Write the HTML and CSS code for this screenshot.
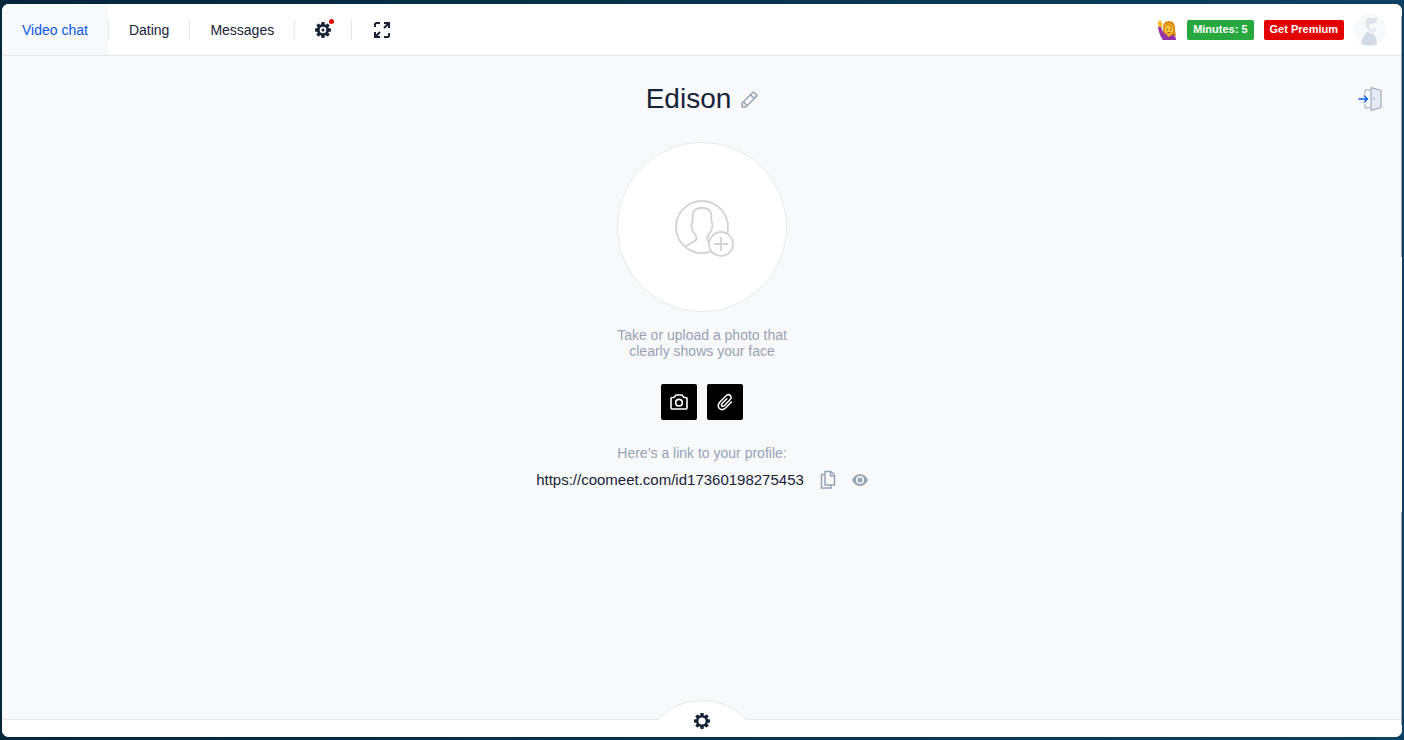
FILE: index.html
```html
<!DOCTYPE html>
<html lang="en">
<head>
<meta charset="utf-8">
<title>Video chat</title>
<link rel="stylesheet" href="styles.css">
</head>
<body>
<svg class="sprite" aria-hidden="true">
  <symbol id="gear" viewBox="0 0 16 16">
    <g fill="currentColor">
      <rect x="6.3" y="0" width="3.4" height="16" rx=".7"/>
      <rect x="0" y="6.3" width="16" height="3.4" rx=".7"/>
      <rect x="6.3" y="0" width="3.4" height="16" rx=".7" transform="rotate(45 8 8)"/>
      <rect x="6.3" y="0" width="3.4" height="16" rx=".7" transform="rotate(-45 8 8)"/>
      <circle cx="8" cy="8" r="6.1"/>
    </g>
  </symbol>
</svg>
<div class="window">
  <header class="header">
    <nav class="nav">
      <a class="tab tab-active" href="#">Video chat</a>
      <a class="tab" href="#">Dating</a>
      <a class="tab" href="#">Messages</a>
      <button class="tab tab-icon" aria-label="Settings">
        <svg width="16" height="16" viewBox="0 0 16 16"><use href="#gear"/><circle cx="8" cy="8" r="3.300" fill="#fff"/><circle cx="8" cy="8" r="1.500" fill="currentColor"/></svg>
        <span class="dot"></span>
      </button>
      <button class="tab tab-icon tab-last" aria-label="Full screen">
        <svg width="20" height="16" viewBox="0 0 20 16" fill="none" stroke="currentColor" stroke-width="2">
          <path d="M3 5V2.500Q3 1 4.500 1H8M17 11v2.500q0 1.500-1.500 1.500H12M12 1h5v5M17 1l-5 5M3 10v5h5M3 15l5-5"/>
        </svg>
      </button>
    </nav>
    <div class="account">
      <svg class="emoji" width="20" height="22" viewBox="0 0 20 22" role="img" aria-label="Raised hand">
        <path d="M6 9q0-7 6-7 6 0 6 7 0 4 1 7-2 3-4 3H8q-3-2-2-10z" fill="#d88912"/>
        <path d="M1 8l3-1q1 6 4 8 4 2 8 1 3 1 3 5H6Q2 16 1 8z" fill="#9432a8"/>
        <path d="M2 8Q0 3 1 2l1 1 0-2 1 1 1-1 0 2 1 0q1 3 0 5z" fill="#f8bd28"/>
        <path d="M10 14h4v3q-2 2-4 0z" fill="#e39c1b"/>
        <ellipse cx="12" cy="10.500" rx="4.500" ry="5" fill="#ffcb39"/>
        <path d="M7 10Q7 4 12 4q5 0 5 6-4-1-6-3-1 2-4 3z" fill="#e9a12a"/>
        <circle cx="10.200" cy="10.500" r=".7" fill="#593b2b"/><circle cx="14" cy="10.500" r=".7" fill="#593b2b"/>
        <path d="M10 13q2 1.500 4 0" stroke="#a5432d" fill="none"/>
      </svg>
      <button class="badge badge-green">Minutes: 5</button>
      <button class="badge badge-red">Get Premium</button>
      <button class="avatar" aria-label="Profile">
        <svg width="32" height="32" viewBox="0 0 32 32">
          <circle cx="16" cy="16" r="16" fill="#f7f9fb"/>
          <path d="M7 30q2-9 7-13l3 3 2-1q4 5 4 11-8 3-16 0z" fill="#d3dbe6"/>
          <path d="M12 12q-1-4 0-6 1-3 5-2 4 1 6-1 1 4-2 6l-5 1-1 4q3 2 6 2l1 1-4 1q-4-1-6-6z" fill="#dfe5ed"/>
          <path d="M17 15l5-2v4l-3 1z" fill="#e9edf3"/>
        </svg>
      </button>
    </div>
  </header>
  <main class="main">
    <button class="exit" aria-label="Leave">
      <svg width="24" height="26" viewBox="0 0 24 26" fill="none">
        <path d="M7 8V4h5M7 18v4h5M7 10v1" stroke="#9ba7ba"/>
        <path d="M13 1.500l10 3v17l-10 3z" fill="#e6eaf2" stroke="#8f9db3"/>
        <path d="M15 13h2" stroke="#8f9db3"/>
        <path d="M.5 13H9M6 9.500L9.500 13 6 16.500" stroke="#0b5be8" stroke-width="1.300"/>
      </svg>
    </button>
    <div class="title-row">
      <h1 class="title">Edison</h1>
      <button class="icon" aria-label="Edit name">
        <svg width="17" height="17" viewBox="0 0 17 17" fill="none" stroke="currentColor" stroke-width="1.500" stroke-linejoin="round">
          <path d="M1 12.200L11.700 1.500q.7-.7 1.400 0l2.400 2.400q.7.700 0 1.400L4.800 16H1zM9.500 3.700l3.800 3.800M2.500 11l3.700 3.700"/>
        </svg>
      </button>
    </div>
    <button class="photo" aria-label="Add photo">
      <svg width="60" height="58" viewBox="0 0 60 58" fill="none" stroke="#d1d2d7" stroke-width="1.800">
        <circle cx="28" cy="28" r="26"/>
        <path d="M12 47l8-4.500q3-1.500 2.500-4.500-.5-2-3-5-2-4-2-7 0-2 1-3 0-6 .5-9 1.500-5 9-5t9 5q.5 3 .5 9 1 1 1 3 0 3-2 7-3 3-3 6-.500 2 1 4"/>
        <circle cx="47" cy="45" r="12" fill="#fff"/>
        <path d="M47 38v14M40 45h14"/>
      </svg>
    </button>
    <p class="note">Take or upload a photo that<br>clearly shows your face</p>
    <div class="actions">
      <button class="action" aria-label="Take photo">
        <svg width="18" height="16" viewBox="0 0 18 16" fill="none" stroke="#fff" stroke-width="1.600">
          <path d="M1 4.500Q1 3.500 2 3.500h2L6 1h6l2 2.500h2q1 0 1 1V14q0 1-1 1H2q-1 0-1-1z"/><circle cx="9" cy="8.700" r="3.300"/>
        </svg>
      </button>
      <button class="action" aria-label="Upload photo">
        <svg width="16" height="18" viewBox="0 0 16 18" fill="none" stroke="#fff" stroke-width="1.500" stroke-linecap="round">
          <path d="M14.500 9L8.500 15Q5 18 2.500 15.500T2.500 9.500L8.500 3.200q2.800-2.700 4.800-.7t-.7 4.800L7.500 12.500q-1.500 1.500-2.600.4t.4-2.600L9.800 5.800"/>
        </svg>
      </button>
    </div>
    <p class="note note-link">Here’s a link to your profile:</p>
    <div class="link-row">
      <a class="link" href="#">https://coomeet.com/id17360198275453</a>
      <button class="icon" aria-label="Copy link">
        <svg width="16" height="20" viewBox="0 0 16 20" fill="none" stroke="currentColor" stroke-width="1.500">
          <path d="M5 1.500h6l3.500 3.500v10H5zM10.500 1.500V6h4M5 4.500H1.500v13.500H11V15"/>
        </svg>
      </button>
      <button class="icon" aria-label="View profile">
        <svg width="16" height="12" viewBox="0 0 16 12">
          <path d="M0 6Q3 0 8 0t8 6q-3 6-8 6T0 6z" fill="currentColor"/><circle cx="8" cy="6" r="3.300" fill="none" stroke="#f8f9fb" stroke-width="1.500"/>
        </svg>
      </button>
    </div>
  </main>
  <footer class="footer">
    <button class="drawer" aria-label="Open settings">
      <svg class="drawer-shape" width="90" height="37" viewBox="0 0 90 37">
        <path d="M0 37V20.500Q18 .5 45 .5t45 20V37z" fill="#fff"/>
        <path d="M0 20.500Q18 .5 45 .5t45 20" fill="none" stroke="#e3e9ef"/>
      </svg>
      <svg class="drawer-gear" width="16" height="16" viewBox="0 0 16 16"><use href="#gear"/><circle cx="8" cy="8" r="3.600" fill="#fff"/></svg>
    </button>
  </footer>
</div>
</body>
</html>
```
FILE: styles.css
```css
* { box-sizing: border-box; }

body {
  margin: 0;
  min-height: 100vh;
  padding: 4px 2px 3px;
  display: flex;
  background: linear-gradient(90deg, #03253a, #0d4062);
  font-family: "Liberation Sans", Arial, sans-serif;
  font-size: 14px;
  color: #172339;
}

button {
  padding: 0;
  border: 0;
  background: none;
  color: inherit;
  font: inherit;
  cursor: pointer;
}

a { color: inherit; text-decoration: none; }
svg { display: block; }
.sprite { position: absolute; width: 0; height: 0; }

.window {
  position: relative;
  flex: 1;
  display: flex;
  flex-direction: column;
  overflow: hidden;
  border-radius: 7px;
  background: #f8f9fb;
}

/* Edge highlight, interrupted in the middle */
.window::after {
  content: "";
  position: absolute;
  inset: 12px 0 12px auto;
  width: 1px;
  background: linear-gradient(#93a6b4 0 34%, transparent 34% 70%, #93a6b4 70%);
}

.header {
  display: flex;
  justify-content: space-between;
  height: 52px;
  border-bottom: 1px solid #e3e6ea;
  background: #fff;
}

.nav { display: flex; }

.tab {
  position: relative;
  display: flex;
  align-items: center;
  padding: 0 20px;
  margin-right: 1px;
}

.tab::after {
  content: "";
  position: absolute;
  top: 16px;
  right: -1px;
  width: 1px;
  height: 20px;
  background: #e3e8ed;
}

.tab-active { background: #f8f9fb; color: #0b5be8; }
.tab-last::after { display: none; }

.dot {
  position: absolute;
  top: 15px;
  right: 17px;
  width: 5px;
  height: 5px;
  border-radius: 50%;
  background: #e60000;
}

.account {
  display: flex;
  align-items: center;
  gap: 10px;
  padding-right: 16px;
}

.badge {
  height: 20px;
  padding: 0 6px 2px;
  border-radius: 2px;
  color: #fff;
  font-size: 11px;
  font-weight: bold;
  line-height: 18px;
}

.badge-green { background: #27a83f; }
.badge-red { background: #e30000; }

.main {
  position: relative;
  flex: 1;
  display: flex;
  flex-direction: column;
  align-items: center;
  padding-top: 27px;
}

.exit { position: absolute; top: 30px; right: 20px; }

.title-row { display: flex; align-items: center; gap: 10px; }

.title {
  margin: 0;
  font-size: 28px;
  font-weight: normal;
  line-height: 32px;
}

.icon { color: #97a3b7; }

.photo {
  display: flex;
  align-items: center;
  justify-content: center;
  width: 170px;
  height: 170px;
  margin-top: 27px;
  padding: 2px 0 0 4px;
  border: 1px solid #e5eaf0;
  border-radius: 50%;
  background: #fff;
}

.note {
  margin: 15px 0 0;
  color: #97a3b7;
  line-height: 16px;
  text-align: center;
}

.actions { display: flex; gap: 10px; margin-top: 25px; }

.action {
  display: flex;
  align-items: center;
  justify-content: center;
  width: 36px;
  height: 36px;
  border-radius: 2px;
  background: #000;
}

.note-link { margin-top: 25px; }

.link-row {
  display: flex;
  align-items: center;
  gap: 16px;
  margin-top: 9px;
}

.link { font-size: 15px; line-height: 20px; }

.footer {
  position: relative;
  height: 18px;
  border-top: 1px solid #e3e6ea;
  background: #fff;
}

.drawer {
  position: absolute;
  left: 50%;
  bottom: 0;
  transform: translateX(-50%);
  display: grid;
  justify-items: center;
  align-items: center;
}

.drawer-shape, .drawer-gear { grid-area: 1 / 1; }
.drawer-gear { margin-top: 5px; }
```
